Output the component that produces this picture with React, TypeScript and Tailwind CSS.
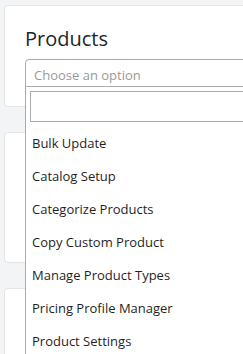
const options = [
  'Bulk Update',
  'Catalog Setup',
  'Categorize Products',
  'Copy Custom Product',
  'Manage Product Types',
  'Pricing Profile Manager',
  'Product Settings',
];

export default function App() {
  return (
    <div
      className="relative w-[243px] h-[354px] overflow-hidden bg-[#f3f4f6]"
      style={{ fontFamily: '"Open Sans", "Noto Sans", sans-serif' }}
    >
      <div className="flex flex-col gap-[25px] pt-[5px] pl-1">
        {/* Products card */}
        <div className="w-[300px] h-[102px] bg-white border border-[#e3e5e8] rounded-[4px] pl-[20px] pt-[19px]">
          <h2 className="text-[20px] leading-[28px] text-[#212529]">Products</h2>
        </div>
        <div className="w-[300px] h-[131px] bg-white border border-[#e3e5e8] rounded-[4px]" />
        <div className="w-[300px] h-[131px] bg-white border border-[#e3e5e8] rounded-[4px]" />
      </div>

      {/* Select with open dropdown */}
      <div className="absolute left-[25px] top-[59px] w-[260px]">
        <div className="h-[28px] border border-[#aaa] rounded-t-[4px] bg-white flex items-center pl-2 pt-[5px] text-[13px] text-[#999]">
          Choose an option
        </div>
        <div className="bg-white border-l border-[#aaa] h-[300px]">
          <div className="px-1 pt-1 pb-[5px]">
            <div className="h-[31px] border border-[#aaa] bg-white" />
          </div>
          <ul>
            {options.map((o) => (
              <li key={o} className="h-[33px] flex items-center pl-[6px] text-[13px] text-[#1f1f1f]">
                {o}
              </li>
            ))}
          </ul>
        </div>
      </div>
    </div>
  );
}
